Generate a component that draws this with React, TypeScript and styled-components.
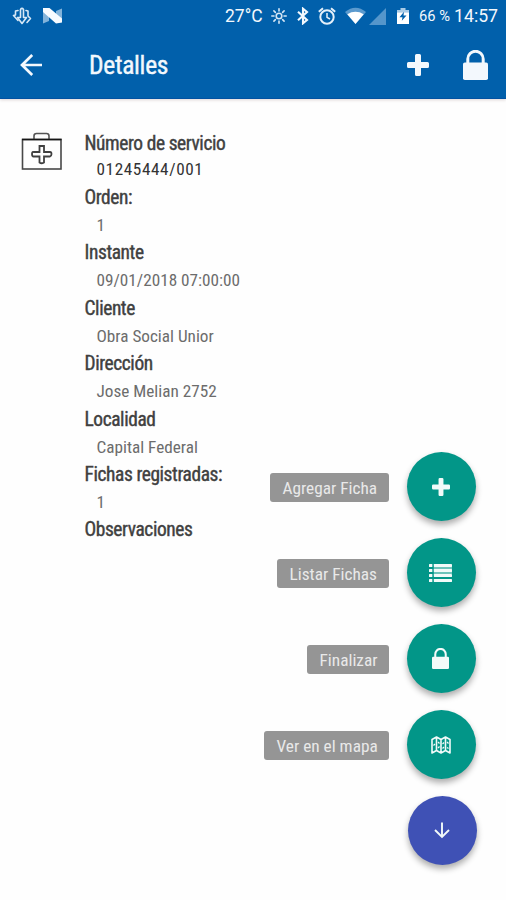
import React from 'react';
import styled, { createGlobalStyle } from 'styled-components';

const GlobalStyle = createGlobalStyle`
  * { box-sizing: border-box; }
  body { margin: 0; background: #fefefe; font-family: Roboto, "Open Sans", sans-serif; }
  svg { display: block; flex: none; }
`;

const Screen = styled.main`
  position: relative;
  width: 506px;
  height: 900px;
  overflow: hidden;
  background: #fefefe;
`;

const Header = styled.header`
  height: 99px;
  background: #0160ab;
  border-bottom: 1px solid #0252a2;
  box-shadow: 0 1px 3px rgba(90, 50, 50, 0.2);
  color: #f3f8fd;
`;

const StatusBar = styled.div`
  display: flex;
  align-items: center;
  height: 32px;
  padding: 0 9px 0 12px;
`;

const StatusText = styled.span<{ $size: number; $width: number; $gap?: number }>`
  flex: none;
  width: ${p => p.$width}px;
  margin-right: ${p => p.$gap ?? 0}px;
  font-size: ${p => p.$size}px;
  line-height: 32px;
  white-space: nowrap;
`;

const StatusIcon = styled.span<{ $gap: number }>`
  flex: none;
  margin-right: ${p => p.$gap}px;
`;

const Toolbar = styled.div`
  display: flex;
  align-items: center;
  height: 66px;
  padding: 0 18px 0 20px;
`;

const Title = styled.h1`
  flex: 1;
  margin: 0 0 0 46px;
  font-size: 25.5px;
  font-weight: 400;
  font-stretch: 75%;
  letter-spacing: -0.3px;
  line-height: 67px;
  -webkit-text-stroke: 0.4px currentColor;
`;

const ToolButton = styled.button<{ $gap?: number }>`
  margin: 0 ${p => p.$gap ?? 0}px 0 0;
  padding: 0;
  border: 0;
  background: none;
  color: inherit;
`;

const Body = styled.section`
  display: flex;
  padding: 31px 0 0 21px;
`;

const CaseFrame = styled.div`
  padding-top: 2px;
`;

const Details = styled.dl`
  margin: 0 0 0 22.5px;
  font-stretch: 75%;
`;

const Term = styled.dt`
  height: 26px;
  color: #404040;
  font-size: 19.4px;
  font-weight: 400;
  letter-spacing: -0.4px;
  line-height: 28px;
  white-space: nowrap;
  -webkit-text-stroke: 0.4px currentColor;
`;

const Value = styled.dd<{ $strong?: boolean }>`
  height: ${p => (p.$strong ? 28 : 29.4)}px;
  margin: 0 0 0 12px;
  color: ${p => (p.$strong ? '#333' : '#6c6c6c')};
  font-size: 17.2px;
  letter-spacing: ${p => (p.$strong ? 0.6 : 0)}px;
  line-height: ${p => (p.$strong ? 26 : 31)}px;
  white-space: nowrap;
`;

const Actions = styled.nav`
  position: absolute;
  right: 29px;
  top: 452px;
  display: flex;
  flex-direction: column;
  align-items: flex-end;
  gap: 17.1px;
`;

const ActionRow = styled.div`
  display: flex;
  align-items: center;
  gap: 17.5px;
  margin-right: 1.5px;
`;

const ActionLabel = styled.span<{ $width: number }>`
  width: ${p => p.$width}px;
  height: 29px;
  margin-top: 2px;
  padding-left: 12.5px;
  border-radius: 3px;
  background: #959595;
  color: #e9e9e9;
  font-size: 17.3px;
  font-stretch: 75%;
  line-height: 30px;
  white-space: nowrap;
`;

const Fab = styled.button<{ $primary?: boolean }>`
  display: flex;
  align-items: center;
  justify-content: center;
  width: 69px;
  height: 69px;
  padding: 0 1px 0 0;
  border: 0;
  border-radius: 50%;
  background: ${p => (p.$primary ? '#3f51b5' : '#029688')};
  color: #f2faf9;
  box-shadow: 0 4px 6px rgba(0, 0, 0, 0.32);
`;

const DownloadIcon = () => (
  <svg width="20" height="18" viewBox="0 0 20 18" fill="none" stroke="#d7e8f6" strokeWidth="1.6" strokeLinejoin="round" strokeLinecap="round">
    <path d="M8.500 10.500V2.500Q10 .3 11.500 2.500V10.500H14.500L10 16.500L5.500 10.500Z" />
    <path d="M6 3.500L3.500 4V8L1.500 8.500L6 13.500M14 3.500L16 4V9L18.500 11.500L15 15.500" />
  </svg>
);

const NougatIcon = () => (
  <svg width="20" height="16" viewBox="0 0 20 16">
    <path d="M0 1L6 3V13L0 15.500ZM13 3L19 .5V14L13 15Z" fill="#82b3da" />
    <path d="M0 0H6.500L19 10.500V14.500L13 15.500L0 4Z" fill="#f7fbff" />
  </svg>
);

const SunIcon = () => (
  <svg width="16" height="16" viewBox="0 0 16 16" fill="none" stroke="#d5e6f5" strokeWidth="1.6" strokeLinecap="round">
    <circle cx="8" cy="8" r="2.800" />
    <path d="M8 .8V3M8 13V15.200M.8 8H3M13 8H15.200M2.900 2.900L4.400 4.400M11.600 11.600L13.100 13.100M2.900 13.100L4.400 11.600M11.600 4.400L13.100 2.900" />
  </svg>
);

const BluetoothIcon = () => (
  <svg width="12" height="18" viewBox="0 0 12 18" fill="none" stroke="currentColor" strokeWidth="2.1">
    <path d="M1 4.800L10 13L6 16.300V1.700L10 5L1 13.200" />
  </svg>
);

const AlarmIcon = () => (
  <svg width="18" height="18" viewBox="0 0 18 18" fill="none" stroke="#e5f0fa" strokeWidth="2">
    <circle cx="9" cy="10" r="6.700" />
    <path d="M.8 4.800L5 1.300M13 1.300L17.200 4.800" />
    <path d="M9 6V10.300L12 12" strokeWidth="1.500" />
  </svg>
);

const WifiIcon = () => (
  <svg width="21" height="18" viewBox="0 0 21 18">
    <path d="M0 5Q10.500-3.500 21 5L10.500 17Z" fill="#5b9ace" />
    <path d="M2.300 7.200Q10.500 2.500 18.700 7.200L10.500 17Z" fill="#fff" />
  </svg>
);

const SignalIcon = () => (
  <svg width="17" height="17" viewBox="0 0 17 17"><path d="M0 17L17 0V17Z" fill="#5596cb" /></svg>
);

const BatteryIcon = () => (
  <svg width="12" height="16" viewBox="0 0 12 17" preserveAspectRatio="none">
    <path d="M3.500 2V0H8.500V2H12V4.500H0V2Z" fill="#a9cbe6" />
    <path d="M0 4.500H12V17H0Z" fill="#fff" />
    <path d="M7 4L2.500 9.700H5.500L4.800 13.500L9.500 8H6.500Z" fill="#0160ab" />
  </svg>
);

const ArrowLeft = () => (
  <svg width="23" height="22" viewBox="0 0 23 22" fill="none" stroke="currentColor" strokeWidth="2.7">
    <path d="M22 11H2M12.200 1L2 11L12.200 21" />
  </svg>
);

const ArrowDown = () => (
  <svg width="16" height="17" viewBox="0 0 16 17" fill="none" stroke="currentColor" strokeWidth="1.9">
    <path d="M8 .5V15M1 8L8 15L15 8" />
  </svg>
);

const PlusIcon = ({ size }: { size: number }) => (
  <svg width={size} height={size} viewBox="0 0 22 22" fill="currentColor">
    <path d="M9.500 0H12.500Q14 0 14 1.500V8H20.500Q22 8 22 9.500V12.500Q22 14 20.500 14H14V20.500Q14 22 12.500 22H9.500Q8 22 8 20.500V14H1.500Q0 14 0 12.500V9.500Q0 8 1.500 8H8V1.500Q8 0 9.500 0Z" />
  </svg>
);

const LockIcon = ({ width, height }: { width: number; height: number }) => (
  <svg width={width} height={height} viewBox="0 0 25 30" preserveAspectRatio="none">
    <path d="M4.800 14V9A7.700 7.700 0 0 1 20.200 9V14" fill="none" stroke="currentColor" strokeWidth="3" />
    <rect y="12.500" width="25" height="17.500" rx="1.800" fill="currentColor" />
  </svg>
);

const ListIcon = () => (
  <svg width="23" height="18" viewBox="0 0 24 18" preserveAspectRatio="none" fill="currentColor">
    {[0, 5, 10, 15].map(y => (
      <React.Fragment key={y}>
        <rect y={y} width="3.500" height="3" rx=".5" />
        <rect x="5" y={y} width="19" height="3" rx=".4" />
      </React.Fragment>
    ))}
    <path d="M5 3H24V10H5Z" opacity=".45" />
  </svg>
);

const MapIcon = () => (
  <svg width="20" height="18" viewBox="0 0 20 18" fill="none" stroke="currentColor" strokeWidth="1.6" strokeLinejoin="round">
    <path d="M1 3.500L5.500 1L10 3.500L14.500 1L19 3.500V17L14.500 14.500L10 17L5.500 14.500L1 17ZM5.500 1V14.500M10 3.500V17M14.500 1V14.500" />
    <path d="M2.500 9.500L4 8M7 6L8.500 7.500M7 12L8.500 10.500M11.500 8L13 6.500M11.500 12.500L13 11M16 6L17.500 7.500M16 11.500L17.500 12.500" strokeWidth="1.300" />
  </svg>
);

const MedicalCase = () => (
  <svg width="41" height="40" viewBox="0 0 41 40" fill="none">
    <path d="M13 7V4Q13 1.500 15.500 1.500H25.500Q28 1.500 28 4V7" stroke="#555" strokeWidth="1.600" />
    <rect x="1.500" y="7.500" width="38.500" height="29.500" stroke="#484848" strokeWidth="1.600" />
    <path d="M1 7.500H40.500" stroke="#161616" strokeWidth="1.600" />
    <path d="M18.500 14H23V20H29Q30.500 20 30.500 22T29 24.500H23V30.500Q20.500 32 18.500 30.500V24.500H12.500Q11 24.500 11 22T12.500 20H18.500Z" stroke="#404040" strokeWidth="1.800" />
  </svg>
);

const details = [
  ['Número de servicio', '01245444/001'],
  ['Orden:', '1'],
  ['Instante', '09/01/2018 07:00:00'],
  ['Cliente', 'Obra Social Unior'],
  ['Dirección', 'Jose Melian 2752'],
  ['Localidad', 'Capital Federal'],
  ['Fichas registradas:', '1'],
  ['Observaciones', ''],
];

const actions = [
  { label: 'Agregar Ficha', width: 119, icon: <PlusIcon size={18} /> },
  { label: 'Listar Fichas', width: 112, icon: <ListIcon /> },
  { label: 'Finalizar', width: 82, icon: <LockIcon width={17} height={21} /> },
  { label: 'Ver en el mapa', width: 125, icon: <MapIcon /> },
];

const Spacer = styled.span`
  flex: 1;
`;

export default function App() {
  return (
    <Screen>
      <GlobalStyle />
      <Header>
        <StatusBar>
          <StatusIcon $gap={11}><DownloadIcon /></StatusIcon>
          <StatusIcon $gap={0}><NougatIcon /></StatusIcon>
          <Spacer />
          <StatusText $size={17.5} $width={37} $gap={9}>27°C</StatusText>
          <StatusIcon $gap={10}><SunIcon /></StatusIcon>
          <StatusIcon $gap={9}><BluetoothIcon /></StatusIcon>
          <StatusIcon $gap={9}><AlarmIcon /></StatusIcon>
          <StatusIcon $gap={3}><WifiIcon /></StatusIcon>
          <StatusIcon $gap={11}><SignalIcon /></StatusIcon>
          <StatusIcon $gap={10}><BatteryIcon /></StatusIcon>
          <StatusText $size={14.7} $width={31} $gap={4}>66 %</StatusText>
          <StatusText $size={17.7} $width={43}>14:57</StatusText>
        </StatusBar>
        <Toolbar>
          <ToolButton aria-label="Volver"><ArrowLeft /></ToolButton>
          <Title>Detalles</Title>
          <ToolButton $gap={34} aria-label="Agregar"><PlusIcon size={22} /></ToolButton>
          <ToolButton aria-label="Bloquear"><LockIcon width={25} height={30} /></ToolButton>
        </Toolbar>
      </Header>
      <Body>
        <CaseFrame><MedicalCase /></CaseFrame>
        <Details>
          {details.map(([term, value], i) => (
            <React.Fragment key={term}>
              <Term>{term}</Term>
              <Value $strong={i === 0}>{value}</Value>
            </React.Fragment>
          ))}
        </Details>
      </Body>
      <Actions>
        {actions.map(a => (
          <ActionRow key={a.label}>
            <ActionLabel $width={a.width}>{a.label}</ActionLabel>
            <Fab aria-label={a.label}>{a.icon}</Fab>
          </ActionRow>
        ))}
        <Fab $primary aria-label="Cerrar menú"><ArrowDown /></Fab>
      </Actions>
    </Screen>
  );
}
